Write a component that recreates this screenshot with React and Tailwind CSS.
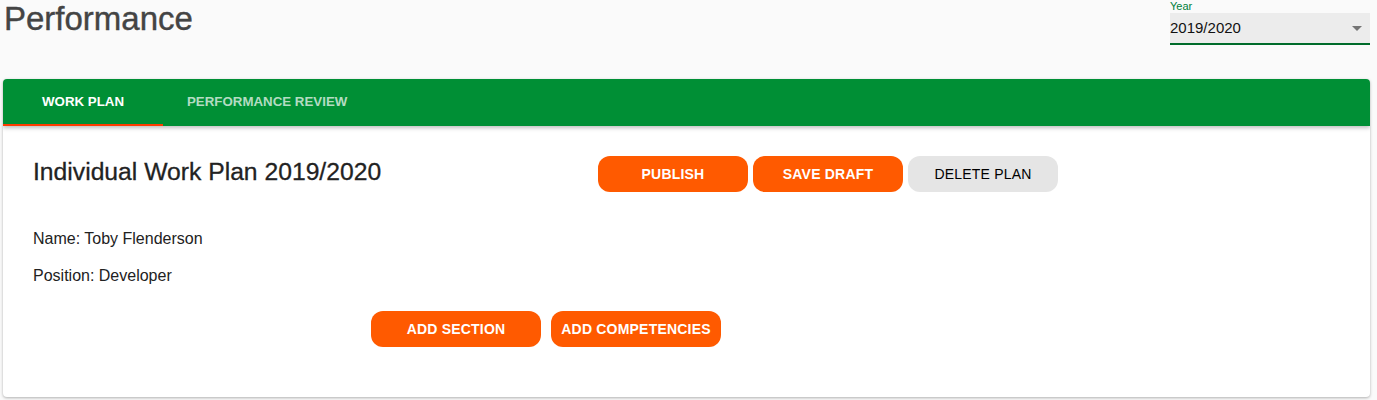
import React, { useState } from 'react';

const OrangeButton = ({ children, className = '' }) => (
    <button className={`h-9 rounded-xl bg-[#ff5a00] text-white text-[14px] font-semibold tracking-[0.2px] ${className}`}>
        {children}
    </button>
);

const App = () => {
    const [tab, setTab] = useState(0);
    const tabs = ['WORK PLAN', 'PERFORMANCE REVIEW'];

    return (
        <div className="min-h-screen bg-[#fafafa] pl-[3px] pr-[7px] font-['Liberation_Sans',Arial,sans-serif] text-[#222]">
            {/* header */}
            <div className="flex justify-between h-[79px]">
                <h1 className="text-[33px] leading-none mt-[2px] ml-[1px] text-[#444] [-webkit-text-stroke:0.4px_#444]">Performance</h1>
                <div className="w-[200px] relative">
                    <div className="text-[11px] leading-[12px] text-[#00803a]">Year</div>
                    <div className="mt-[1px] h-[32px] bg-[#ececec] border-b-2 border-[#006b2b] flex items-center justify-between pr-[8px]">
                        <span className="text-[15px] text-[#111]">2019/2020</span>
                        <svg width="10" height="5" viewBox="0 0 10 5"><path d="M0 0 L10 0 L5 5 Z" fill="#757575" /></svg>
                    </div>
                </div>
            </div>

            {/* card */}
            <div className="bg-white rounded-[4px] shadow-[0_1px_3px_rgba(0,0,0,0.3)] overflow-hidden h-[318px]">
                <div className="flex bg-[#008f35] h-[47px] shadow-[0_2px_4px_rgba(0,0,0,0.25)] relative">
                    {tabs.map((t, i) => (
                        <button
                            key={t}
                            onClick={() => setTab(i)}
                            className={`min-w-[160px] px-6 text-[13.3px] font-semibold border-b-2 ${tab === i ? 'text-white border-[#ff3d00]' : 'text-[#b3dcc2] border-transparent'}`}
                        >
                            {t}
                        </button>
                    ))}
                </div>

                <div className="pl-[30px] pt-[30px]">
                    <div className="flex items-start">
                        <h2 className="text-[24.7px] leading-none mt-[4px] w-[565px] [-webkit-text-stroke:0.3px_#222]">Individual Work Plan 2019/2020</h2>
                        <div className="flex gap-[5px]">
                            <OrangeButton className="w-[150px]">PUBLISH</OrangeButton>
                            <OrangeButton className="w-[150px]">SAVE DRAFT</OrangeButton>
                            <button className="h-9 w-[150px] rounded-xl bg-[#e5e5e5] text-black text-[14px] font-normal tracking-[0.2px]">DELETE PLAN</button>
                        </div>
                    </div>
                    <p className="text-[16px] mt-[35px]">Name: Toby Flenderson</p>
                    <p className="text-[16px] mt-[13px]">Position: Developer</p>
                    <div className="flex gap-[10px] ml-[338px] mt-[23px]">
                        <OrangeButton className="w-[170px]">ADD SECTION</OrangeButton>
                        <OrangeButton className="w-[170px]">ADD COMPETENCIES</OrangeButton>
                    </div>
                </div>
            </div>
        </div>
    );
};

export default App;
